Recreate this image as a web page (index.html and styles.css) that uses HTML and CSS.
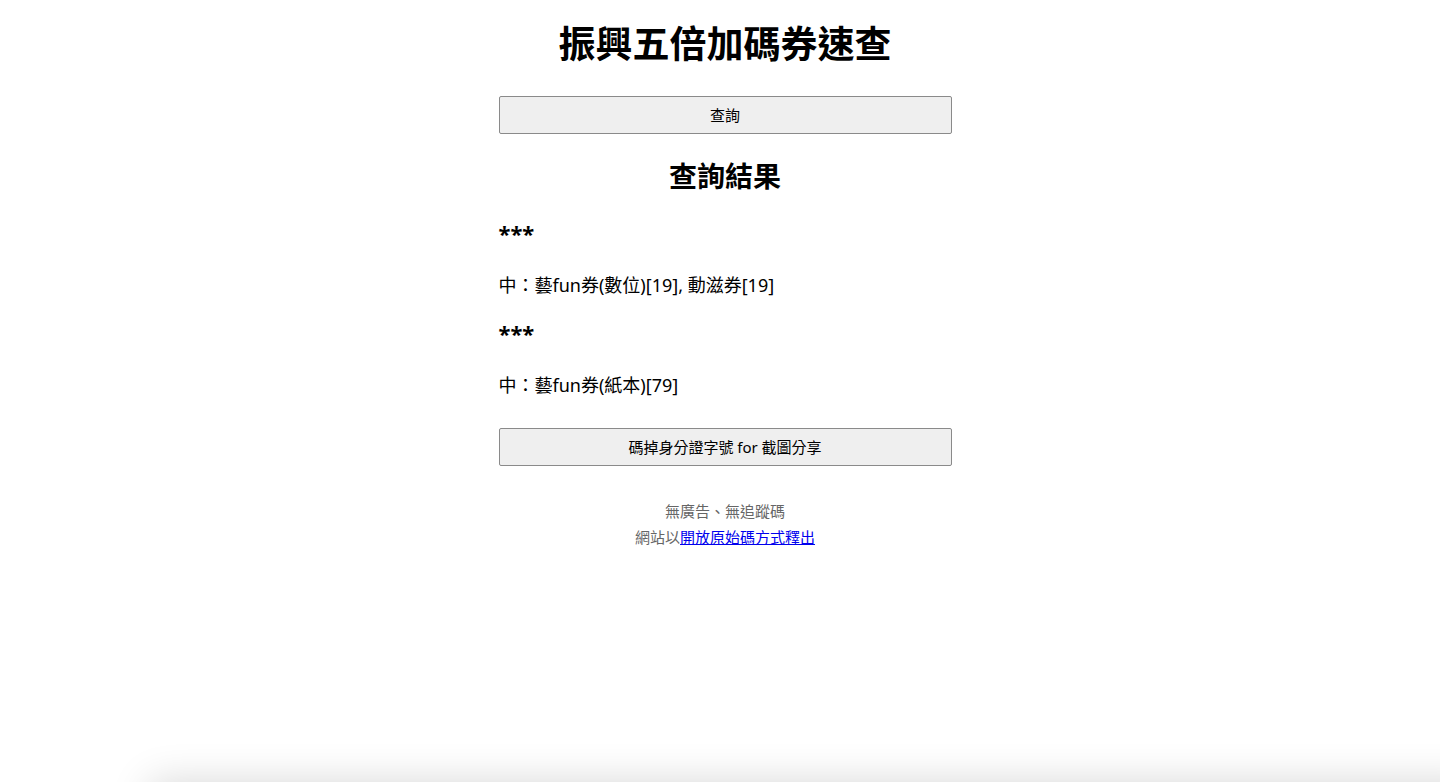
FILE: index.html
```html
<!DOCTYPE html>
<html lang="zh-Hant">
<head>
<meta charset="utf-8">
<title>振興五倍加碼券速查</title>
<link rel="stylesheet" href="styles.css">
</head>
<body>
<main class="page">
  <h1 class="title">振興五倍加碼券速查</h1>
  <button class="btn btn-query" type="button">查詢</button>
  <h2 class="result-title">查詢結果</h2>
  <section class="results">
    <p class="masked">***</p>
    <p class="hit">中：藝fun券(數位)[19], 動滋券[19]</p>
    <p class="masked">***</p>
    <p class="hit">中：藝fun券(紙本)[79]</p>
  </section>
  <button class="btn btn-mask" type="button">碼掉身分證字號 for 截圖分享</button>
  <footer class="footer">
    <p>無廣告、無追蹤碼</p>
    <p>網站以<a href="#">開放原始碼方式釋出</a></p>
  </footer>
</main>
<div class="bottom-sheet"></div>
</body>
</html>
```

FILE: styles.css
```css
html, body {
  margin: 0;
  padding: 0;
  background: #ffffff;
}

body {
  padding-left: 10px;
  font-family: "Noto Sans", "Noto Sans CJK TC", sans-serif;
  color: #000;
  overflow: hidden;
}

.page {
  width: 453px;
  margin: 0 auto;
  display: flex;
  flex-direction: column;
}

.title {
  margin: 19px 0 0;
  font-size: 37px;
  line-height: 50px;
  font-weight: 700;
  text-align: center;
}

.btn {
  display: block;
  width: 100%;
  height: 38px;
  padding: 0;
  border: 1px solid #8a8a8a;
  border-radius: 2px;
  background: #efefef;
  color: #000;
  font-family: "Noto Sans", "Noto Sans CJK TC", sans-serif;
  font-size: 15px;
  line-height: 20px;
}

.btn-query {
  margin-top: 27px;
}

.result-title {
  margin: 25px 0 0;
  font-size: 28px;
  line-height: 34px;
  font-weight: 700;
  text-align: center;
}

.results {
  display: flex;
  flex-direction: column;
}

.results p {
  margin: 0;
}

.masked {
  font-size: 22px;
  line-height: 28px;
  font-weight: 700;
  margin-top: 26px !important;
}

.masked + .hit {
  margin-top: 25px !important;
}

.hit + .masked {
  margin-top: 21px !important;
}

.hit {
  font-size: 18px;
  line-height: 26px;
}

.btn-mask {
  margin-top: 30px;
}

.footer {
  margin-top: 32px;
  text-align: center;
  color: #666;
  font-size: 15px;
  line-height: 26px;
}

.footer p {
  margin: 0;
}

.footer a {
  color: #0000ee;
  text-decoration: underline;
}

.bottom-sheet {
  position: fixed;
  left: 150px;
  right: -40px;
  top: 782px;
  height: 60px;
  background: #fff;
  box-shadow: 0 0 40px rgba(0, 0, 0, 0.16);
}
```
